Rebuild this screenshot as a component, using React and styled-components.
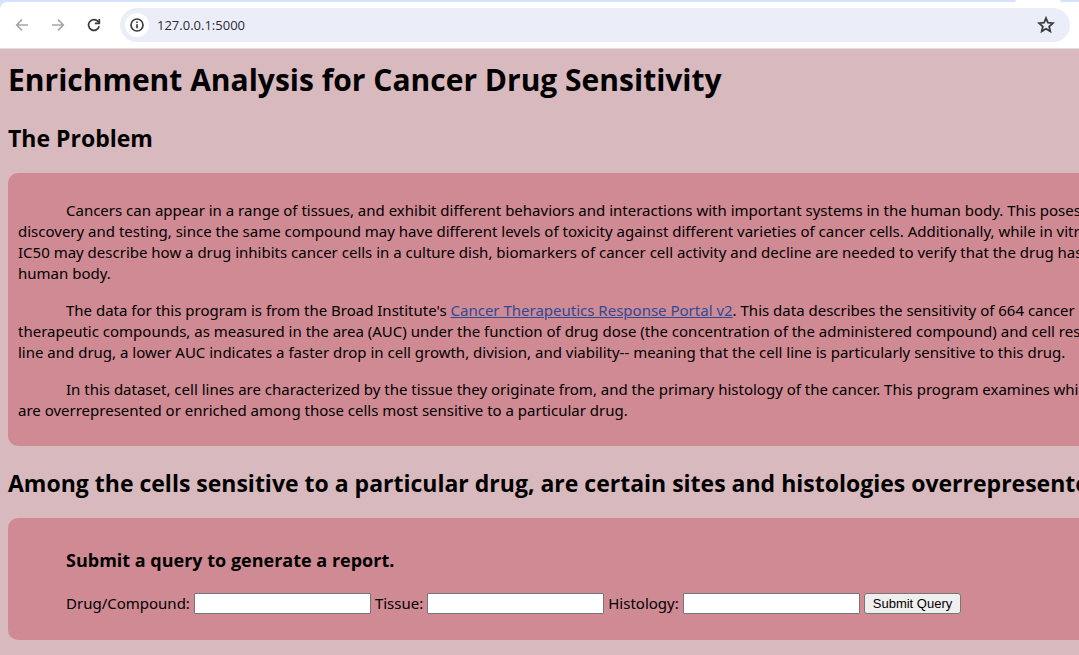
import React from "react";
import styled, { createGlobalStyle } from "styled-components";

const GlobalStyle = createGlobalStyle`
  * { box-sizing: border-box; }
  body {
    margin: 0;
    background: #d8b9be;
    color: #000;
    font-family: "Segoe UI", "Noto Sans", "Open Sans", sans-serif;
    font-size: 15px;
    line-height: 21px;
    overflow-x: hidden;
  }
`;

const BrowserBar = styled.header`
  background: #d3e3fd;
  border-bottom: 1px solid #dfe1e0;
`;

const TabEdge = styled.div`
  display: flex;
  justify-content: space-between;
  height: 2px;
  background: #fff;
`;

const TabStrip = styled.div`
  width: ${(p) => p.$width || "auto"};
  flex: ${(p) => (p.$grow ? 1 : "none")};
  margin-right: ${(p) => (p.$grow ? "44px" : "0")};
  background: #d3e3fd;
  border-radius: ${(p) => (p.$grow ? "0 0 4px 0" : "0 0 0 4px")};
`;

const Toolbar = styled.nav`
  display: flex;
  align-items: center;
  gap: 12px;
  padding: 6px 9px 6px 10px;
  border-radius: 7px 0 0 0;
  background: #fff;
`;

const ToolButton = styled.button`
  display: flex;
  align-items: center;
  justify-content: center;
  width: 24px;
  height: 24px;
  padding: 0;
  border: 0;
  border-radius: 12px;
  background: ${(p) => (p.$filled ? "#fff" : "transparent")};
  color: ${(p) => (p.$muted ? "#a6a6a6" : "#3c3d3f")};
`;

const AddressBar = styled.div`
  display: flex;
  flex: 1;
  align-items: center;
  gap: 8px;
  height: 34px;
  margin-left: 2px;
  padding: 0 12px 0 5px;
  border-radius: 17px;
  background: #ebeef8;
`;

const AddressInput = styled.input`
  flex: 1;
  min-width: 0;
  padding: 0;
  border: 0;
  outline: 0;
  background: transparent;
  color: #2a2b2e;
  font-family: "Segoe UI", "Open Sans", sans-serif;
  font-size: 13px;
  line-height: 20px;
`;

const Page = styled.main`
  padding: 10px 0 16px 8px;
  white-space: nowrap;
  overflow: hidden;
`;

const Title = styled.h1`
  margin: 0 0 21px;
  font-family: "Segoe UI", "Open Sans", sans-serif;
  font-size: 30px;
  font-weight: 700;
  line-height: 42px;
`;

const SectionTitle = styled.h2`
  margin: 21px 0 19px;
  font-family: "Segoe UI", "Open Sans", sans-serif;
  font-size: 23px;
  font-weight: 700;
  line-height: 32px;
`;

const Panel = styled.section`
  padding: 11px 10px 9px;
  border-radius: 10px 0 0 10px;
  background: #d08a94;
`;

const Paragraph = styled.p`
  margin: 16px 0;
  text-indent: 48px;
`;

const SourceLink = styled.a`
  color: #2f4a94;
  text-decoration: underline;
`;

const FormTitle = styled.h3`
  margin: 19px 48px;
  font-family: "Segoe UI", "Open Sans", sans-serif;
  font-size: 18px;
  font-weight: 700;
  line-height: 25px;
`;

const QueryForm = styled.form`
  display: flex;
  align-items: center;
  gap: 4px;
  height: 23px;
  margin: 0 48px 16px;
`;

const Field = styled.input`
  width: 177px;
  height: 21px;
  padding: 1px 2px;
  border: 1px solid #767676;
  border-radius: 1px;
  background: #fff;
`;

const SubmitButton = styled.button`
  height: 21px;
  padding: 0 8px;
  border: 1px solid #767676;
  border-radius: 3px;
  background: #efefef;
  color: #000;
  font-family: Arial, "Liberation Sans", sans-serif;
  font-size: 13px;
  line-height: 15px;
`;

const Icon = ({ children, size = 16 }) => (
  <svg width={size} height={size} viewBox="0 0 16 16" fill="none" stroke="currentColor" strokeWidth="1.7" aria-hidden="true">
    {children}
  </svg>
);

const fields = [
  { id: "drug", label: "Drug/Compound:" },
  { id: "tissue", label: "Tissue:" },
  { id: "histology", label: "Histology:" },
];

export default function App() {
  return (
    <>
      <GlobalStyle />
      <BrowserBar>
        <TabEdge>
          <TabStrip $grow />
          <TabStrip $width="19px" />
        </TabEdge>
        <Toolbar>
          <ToolButton $muted aria-label="Back">
            <Icon><path d="M14 8H3M8 2.7 2.7 8 8 13.3" /></Icon>
          </ToolButton>
          <ToolButton $muted aria-label="Forward">
            <Icon><path d="M2 8h11M8 2.7 13.3 8 8 13.3" /></Icon>
          </ToolButton>
          <ToolButton aria-label="Reload">
            <Icon>
              <path d="M13.2 9.3A5.4 5.4 0 1 1 12 4.4L13.5 6" />
              <path d="M13.3 2v4.4H8.9" />
            </Icon>
          </ToolButton>
          <AddressBar>
            <ToolButton $filled aria-label="Site information">
              <Icon>
                <circle cx="8" cy="8" r="6" />
                <path d="M8 7.2v4M8 4.5v1.6" />
              </Icon>
            </ToolButton>
            <AddressInput aria-label="Address" defaultValue="127.0.0.1:5000" />
            <ToolButton aria-label="Bookmark">
              <Icon size={18}>
                <path strokeWidth="1.6" d="M8 1.9 9.7 6l4.4.4-3.3 2.9 1 4.3L8 11.3l-3.8 2.3 1-4.3-3.3-2.9L6.3 6Z" />
              </Icon>
            </ToolButton>
          </AddressBar>
        </Toolbar>
      </BrowserBar>
      <Page>
        <Title>Enrichment Analysis for Cancer Drug Sensitivity</Title>
        <SectionTitle>The Problem</SectionTitle>
        <Panel>
          <Paragraph>
            Cancers can appear in a range of tissues, and exhibit different behaviors and interactions with important systems in the human body. This poses
            <br />
            discovery and testing, since the same compound may have different levels of toxicity against different varieties of cancer cells. Additionally, while in vitro
            <br />
            IC50 may describe how a drug inhibits cancer cells in a culture dish, biomarkers of cancer cell activity and decline are needed to verify that the drug has
            <br />
            human body.
          </Paragraph>
          <Paragraph>
            The data for this program is from the Broad Institute's{" "}
            <SourceLink href="#portal">Cancer Therapeutics Response Portal v2</SourceLink>. This data describes the sensitivity of 664 cancer cell
            <br />
            therapeutic compounds, as measured in the area (AUC) under the function of drug dose (the concentration of the administered compound) and cell response
            <br />
            line and drug, a lower AUC indicates a faster drop in cell growth, division, and viability-- meaning that the cell line is particularly sensitive to this drug.
          </Paragraph>
          <Paragraph>
            In this dataset, cell lines are characterized by the tissue they originate from, and the primary histology of the cancer. This program examines which
            <br />
            are overrepresented or enriched among those cells most sensitive to a particular drug.
          </Paragraph>
        </Panel>
        <SectionTitle>Among the cells sensitive to a particular drug, are certain sites and histologies overrepresented</SectionTitle>
        <Panel>
          <FormTitle>Submit a query to generate a report.</FormTitle>
          <QueryForm onSubmit={(e) => e.preventDefault()}>
            {fields.map(({ id, label }) => (
              <React.Fragment key={id}>
                <label htmlFor={id}>{label}</label>
                <Field id={id} name={id} type="text" />
              </React.Fragment>
            ))}
            <SubmitButton type="submit">Submit Query</SubmitButton>
          </QueryForm>
        </Panel>
      </Page>
    </>
  );
}
